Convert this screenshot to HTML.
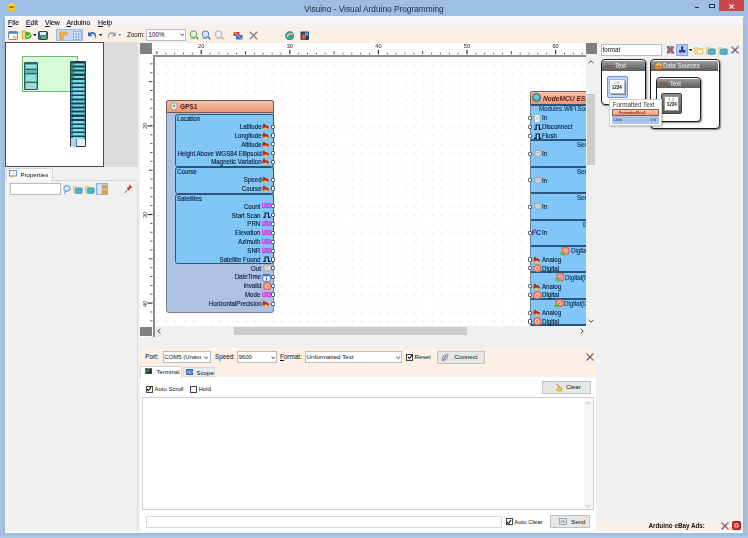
<!DOCTYPE html>
<html>
<head>
<meta charset="utf-8">
<title>Visuino - Visual Arduino Programming</title>
<style>
*{box-sizing:border-box;margin:0;padding:0}
html,body{width:748px;height:538px;overflow:hidden;background:#9ebde3;}
body{font-family:"Liberation Sans",sans-serif;font-size:7px;color:#111;position:relative}
#root{position:absolute;left:0;top:0;width:748px;height:538px;overflow:hidden;filter:blur(0.4px)}
.a{position:absolute}
.t{position:absolute;white-space:nowrap;line-height:1}
.m{top:19.7px;font-size:6.9px;color:#0c0c10;-webkit-text-stroke:.1px #0c0c10}
.gsq{position:absolute;background:#808080}
.blk{position:absolute;border:1.4px solid #74808f;border-radius:3px;background:#adc2e3}
.hdr{position:absolute;border:1.2px solid #7a5a4c;border-radius:3px 3px 0 0;background:linear-gradient(#f7c4aa,#ef9774)}
.grp{position:absolute;border:1.2px solid #30527a;border-radius:2.5px;background:#80c7f8}
.pin{position:absolute;width:4.4px;height:4.4px;border:1px solid #36424e;background:#fff;border-radius:1.3px}
.r{position:absolute;white-space:nowrap;line-height:1;text-align:right;font-size:6.6px;color:#061a32;-webkit-text-stroke:.12px #061a32;transform:scaleX(.93);transform-origin:100% 50%}
.l{position:absolute;white-space:nowrap;line-height:1;font-size:6.6px;color:#061a32;-webkit-text-stroke:.12px #061a32;transform:scaleX(.93);transform-origin:0 50%}
.btn{position:absolute;background:#e7e7e7;border:1px solid #c2c2c2}
.inp{position:absolute;background:#fff;border:1px solid #b8bcc4}
.cb{position:absolute;width:7px;height:7px;background:#fff;border:1px solid #444}
.pg{position:absolute;border:1.5px solid #1c1c1c;border-radius:4px;background:#fff;box-shadow:1px 1px 1.5px rgba(0,0,0,.45)}
.pgh{position:absolute;background:linear-gradient(#9a9a9a,#5c5c5c);border-radius:2px 2px 0 0}
</style>
</head>
<body>
<div id="root">
<div class="a" style="left:0;top:0;width:748px;height:17px;background:#9ebde3"></div>
<div class="t" style="left:0px;top:4.9px;width:748px;text-align:center;font-size:8.3px;color:#1d2b3e">Visuino - Visual Arduino Programming</div>
<div class="a" style="left:4px;top:16.2px;width:740px;height:12px;background:linear-gradient(#f6f8fc,#f3f4fa 55%,#f8f0ee)"></div>
<div class="a" style="left:4px;top:28px;width:740px;height:14px;background:#fcefe4"></div>
<div class="a" style="left:4px;top:42px;width:740px;height:491px;background:#f0f0f0"></div>
<div class="a" style="left:7.2px;top:2.8px;width:8.8px;height:8.8px;border-radius:50%;background:radial-gradient(circle at 50% 35%,#f9e25a,#e0a91a)"></div>
<div class="a" style="left:9px;top:5.6px;width:5.2px;height:2px;background:#a8741a;border-radius:1px"></div>
<div class="a" style="left:695px;top:6.9px;width:4.3px;height:1.4px;background:#1a2a40"></div>
<div class="a" style="left:709px;top:3.7px;width:6.2px;height:4.8px;border:.9px solid #23364e;border-top-width:1.6px;background:#b9cde6"></div>
<div class="a" style="left:719.3px;top:0;width:24.3px;height:11.4px;background:#c9474b"></div>
<svg class="a" style="left:729.4px;top:3.8px" width="5.2" height="5.2" viewBox="0 0 5.2 5.2"><path d="M.5 .5l4.200 4.200M4.700 .5L.5 4.700" stroke="#fdeeee" stroke-width="1.100"/></svg>
<div class="t m" style="left:8px"><u>F</u>ile</div>
<div class="t m" style="left:26px"><u>E</u>dit</div>
<div class="t m" style="left:45px"><u>V</u>iew</div>
<div class="t m" style="left:66.5px"><u>A</u>rduino</div>
<div class="t m" style="left:98px"><u>H</u>elp</div>
<svg class="a" style="left:7.5px;top:30.5px" width="10" height="9" viewBox="0 0 10 9"><rect x="0.5" y="0.5" width="9" height="8" rx="1" fill="#fffdf4" stroke="#7d8a96"/><rect x="0.5" y="0.5" width="9" height="2.2" fill="#3f8fb8"/><rect x="5" y="5" width="3.5" height="2.5" fill="#f0c860"/></svg>
<svg class="a" style="left:21px;top:30px" width="11" height="10" viewBox="0 0 11 10"><path d="M1 1h4l1 1v7H1z" fill="#f3d870" stroke="#c9a638" stroke-width=".6"/><path d="M4 2.5c4-1.5 6.5 1 6.5 3.2c0 2.5-3 4-6 3z" fill="#4cae3c"/><path d="M5 5.5l2 1.8l2.6-3.4" stroke="#d9f5c8" stroke-width="1" fill="none"/></svg>
<svg class="a" style="left:33px;top:34px" width="3.4" height="2.4" viewBox="0 0 3.4 2.4"><path d="M0 0h3.4L1.7 2.2z" fill="#111"/></svg>
<svg class="a" style="left:37.5px;top:30.5px" width="10" height="9" viewBox="0 0 10 9"><rect x="0.5" y="0.5" width="9" height="8" rx="1" fill="#2f66a8" stroke="#1f4a80"/><rect x="2" y="1" width="6" height="3.2" fill="#e9f0fb"/><rect x="3" y="5" width="5.5" height="3" fill="#55b055"/></svg>
<div class="a" style="left:56px;top:29px;width:27px;height:12px;background:#c3d9f3;border:1px solid #9dbce0"></div>
<svg class="a" style="left:59px;top:30.5px" width="9" height="9" viewBox="0 0 9 9"><path d="M1 1h7v3H4v4.5H1z" fill="#f2b24a" stroke="#c98a2a" stroke-width=".6"/></svg>
<svg class="a" style="left:72.5px;top:30.5px" width="9" height="9" viewBox="0 0 9 9"><rect x=".5" y=".5" width="8" height="8" fill="#dbe8f8" stroke="#7f9cc4" stroke-width=".6"/><path d="M3.2 .5v8M5.8 .5v8M.5 3.2h8M.5 5.8h8" stroke="#7f9cc4" stroke-width=".6"/></svg>
<svg class="a" style="left:86.5px;top:30.5px" width="11" height="9" viewBox="0 0 11 9"><path d="M1 .8v4.4h4.4L3.8 3.6c2-1.3 4.6-.3 4.4 3.6l-.3 1.5c2.2-3.4 1.2-7.6-2.6-7.6c-1.2 0-2 .4-2.8 1z" fill="#2f62c4"/></svg>
<svg class="a" style="left:99px;top:34px" width="3.4" height="2.4" viewBox="0 0 3.4 2.4"><path d="M0 0h3.4L1.7 2.2z" fill="#111"/></svg>
<svg class="a" style="left:105.5px;top:30.5px" width="11" height="9" viewBox="0 0 11 9"><path d="M10 .8v4.4H5.6l1.6-1.6c-2-1.3-4.6-.3-4.4 3.6l.3 1.5C.9 5.3 1.9 1.100 5.700 1.100c1.200 0 2 .4 2.800 1z" fill="#a3a9b4"/></svg>
<svg class="a" style="left:118px;top:34px" width="3.4" height="2.4" viewBox="0 0 3.4 2.4"><path d="M0 0h3.4L1.700 2.200z" fill="#8a8a8a"/></svg>
<div class="t" style="left:127px;top:31.5px;font-size:6.3px;color:#111">Zoom:</div>
<div class="inp" style="left:146px;top:29px;width:40px;height:11.500px;"></div>
<div class="t" style="left:148.5px;top:31.5px;font-size:6.300px">100%</div>
<svg class="a" style="left:179.5px;top:33px" width="4.5" height="3.5" viewBox="0 0 4.5 3.5"><path d="M.4 .6L2.250 2.600L4.100 .6" stroke="#333" stroke-width=".9" fill="none"/></svg>
<svg class="a" style="left:189px;top:30px" width="10.5" height="10.5" viewBox="0 0 10.5 10.5"><circle cx="4.500" cy="4.200" r="3.300" fill="#e0f4d0" stroke="#4a9a46" stroke-width=".9"/><path d="M6.800 6.700l2.600 2.600" stroke="#4a9a46" stroke-width="1.400"/><path d="M1.500 8.600h4.500" stroke="#4a9a46" stroke-width="1" opacity=".7"/></svg>
<svg class="a" style="left:201px;top:30px" width="10.5" height="10.5" viewBox="0 0 10.5 10.5"><circle cx="4.500" cy="4.200" r="3.300" fill="#dce8f8" stroke="#3e6eb4" stroke-width=".9"/><path d="M6.800 6.700l2.600 2.600" stroke="#3e6eb4" stroke-width="1.400"/><path d="M1.500 8.600h4.500" stroke="#3e6eb4" stroke-width="1" opacity=".7"/></svg>
<svg class="a" style="left:213.5px;top:30px" width="10.5" height="10.5" viewBox="0 0 10.5 10.5"><circle cx="4.500" cy="4.200" r="3.300" fill="#eceef0" stroke="#a8aeb8" stroke-width=".9"/><path d="M6.800 6.700l2.600 2.600" stroke="#a8aeb8" stroke-width="1.400"/><path d="M1.500 8.600h4.500" stroke="#a8aeb8" stroke-width="1" opacity=".7"/></svg>
<svg class="a" style="left:233px;top:30.5px" width="10" height="9" viewBox="0 0 10 9"><rect x=".5" y="1" width="6" height="4" fill="#cf3d3d"/><rect x="3" y="4" width="6.500" height="4.500" fill="#3b6cc0"/><path d="M1 .5l8 8" stroke="#fff" stroke-width=".7"/></svg>
<svg class="a" style="left:248.5px;top:30.5px" width="9" height="9" viewBox="0 0 9 9"><path d="M.8 .8l7.400 7.400M8.200 .8L.8 8.200" stroke="#7c8088" stroke-width="1.300"/></svg>
<svg class="a" style="left:284.5px;top:30.5px" width="9.5" height="9.5" viewBox="0 0 9.5 9.5"><circle cx="4.700" cy="4.700" r="4.200" fill="#35a7a0" stroke="#1e6e78" stroke-width=".6"/><path d="M2 6c1-3 4-4 6-2.500" stroke="#f3b0a0" stroke-width="1.600" fill="none"/></svg>
<svg class="a" style="left:300px;top:30.5px" width="9.5" height="9.5" viewBox="0 0 9.5 9.5"><rect x=".5" y=".5" width="8.500" height="8.500" rx="1" fill="#27446e"/><rect x="2" y="3.500" width="3.500" height="5" fill="#d95a4a"/><rect x="5" y="1.500" width="3" height="3" fill="#6fa6e0"/></svg>
<div class="a" style="left:4.500px;top:42px;width:99.500px;height:124.500px;background:#fff;border:1px solid #4c4c4c"></div>
<div class="a" style="left:104px;top:42px;width:34px;height:124.500px;background:#dcdcdc"></div>
<div class="a" style="left:21.500px;top:56px;width:56.500px;height:35.500px;background:#d6fbd6;border:1px solid #74b874"></div>
<div class="a" style="left:24px;top:62px;width:13.500px;height:28px;background:#5fb7b0;border:1px solid #2a5a58;border-radius:1px"></div>
<div class="a" style="left:25px;top:63px;width:11.500px;height:1.200px;background:#2f6a66"></div>
<div class="a" style="left:25px;top:68.5px;width:11.500px;height:1.200px;background:#2f6a66"></div>
<div class="a" style="left:25px;top:73px;width:11.500px;height:1.200px;background:#2f6a66"></div>
<div class="a" style="left:25px;top:81.5px;width:11.500px;height:1.200px;background:#2f6a66"></div>
<div class="a" style="left:26px;top:64.500px;width:10px;height:3.500px;background:#8fe0dc"></div>
<div class="a" style="left:26px;top:74.500px;width:10px;height:6px;background:#8fe0dc"></div>
<div class="a" style="left:26px;top:83px;width:10px;height:5.500px;background:#a8d4d8"></div>
<div class="a" style="left:70px;top:60.500px;width:16px;height:86.500px;background:#3f8fa4;border:1px solid #1f3a4a;border-radius:1px"></div>
<div class="a" style="left:71px;top:62.0px;width:14px;height:1.300px;background:#1c3e50"></div>
<div class="a" style="left:73px;top:63.6px;width:11px;height:1.700px;background:#7fd6e4"></div>
<div class="a" style="left:71px;top:66.1px;width:14px;height:1.300px;background:#1c3e50"></div>
<div class="a" style="left:73px;top:67.7px;width:11px;height:1.700px;background:#7fd6e4"></div>
<div class="a" style="left:71px;top:70.2px;width:14px;height:1.300px;background:#1c3e50"></div>
<div class="a" style="left:73px;top:71.8px;width:11px;height:1.700px;background:#7fd6e4"></div>
<div class="a" style="left:71px;top:74.3px;width:14px;height:1.300px;background:#1c3e50"></div>
<div class="a" style="left:73px;top:75.9px;width:11px;height:1.700px;background:#7fd6e4"></div>
<div class="a" style="left:71px;top:78.4px;width:14px;height:1.300px;background:#1c3e50"></div>
<div class="a" style="left:73px;top:80.0px;width:11px;height:1.700px;background:#7fd6e4"></div>
<div class="a" style="left:71px;top:82.5px;width:14px;height:1.300px;background:#1c3e50"></div>
<div class="a" style="left:73px;top:84.1px;width:11px;height:1.700px;background:#7fd6e4"></div>
<div class="a" style="left:71px;top:86.6px;width:14px;height:1.300px;background:#1c3e50"></div>
<div class="a" style="left:73px;top:88.2px;width:11px;height:1.700px;background:#7fd6e4"></div>
<div class="a" style="left:71px;top:90.7px;width:14px;height:1.300px;background:#1c3e50"></div>
<div class="a" style="left:73px;top:92.3px;width:11px;height:1.700px;background:#7fd6e4"></div>
<div class="a" style="left:71px;top:94.8px;width:14px;height:1.300px;background:#1c3e50"></div>
<div class="a" style="left:73px;top:96.4px;width:11px;height:1.700px;background:#7fd6e4"></div>
<div class="a" style="left:71px;top:98.9px;width:14px;height:1.300px;background:#1c3e50"></div>
<div class="a" style="left:73px;top:100.5px;width:11px;height:1.700px;background:#7fd6e4"></div>
<div class="a" style="left:71px;top:103.0px;width:14px;height:1.300px;background:#1c3e50"></div>
<div class="a" style="left:73px;top:104.6px;width:11px;height:1.700px;background:#7fd6e4"></div>
<div class="a" style="left:71px;top:107.1px;width:14px;height:1.300px;background:#1c3e50"></div>
<div class="a" style="left:73px;top:108.7px;width:11px;height:1.700px;background:#7fd6e4"></div>
<div class="a" style="left:71px;top:111.2px;width:14px;height:1.300px;background:#1c3e50"></div>
<div class="a" style="left:73px;top:112.8px;width:11px;height:1.700px;background:#7fd6e4"></div>
<div class="a" style="left:71px;top:115.3px;width:14px;height:1.300px;background:#1c3e50"></div>
<div class="a" style="left:73px;top:116.9px;width:11px;height:1.700px;background:#7fd6e4"></div>
<div class="a" style="left:71px;top:119.4px;width:14px;height:1.300px;background:#1c3e50"></div>
<div class="a" style="left:73px;top:121.0px;width:11px;height:1.700px;background:#7fd6e4"></div>
<div class="a" style="left:71px;top:123.5px;width:14px;height:1.300px;background:#1c3e50"></div>
<div class="a" style="left:73px;top:125.1px;width:11px;height:1.700px;background:#7fd6e4"></div>
<div class="a" style="left:71px;top:127.6px;width:14px;height:1.300px;background:#1c3e50"></div>
<div class="a" style="left:73px;top:129.2px;width:11px;height:1.700px;background:#7fd6e4"></div>
<div class="a" style="left:71px;top:131.7px;width:14px;height:1.300px;background:#1c3e50"></div>
<div class="a" style="left:73px;top:133.3px;width:11px;height:1.700px;background:#7fd6e4"></div>
<div class="a" style="left:71px;top:135.8px;width:14px;height:1.300px;background:#1c3e50"></div>
<div class="a" style="left:73px;top:137.4px;width:11px;height:1.700px;background:#7fd6e4"></div>
<div class="a" style="left:70.500px;top:138px;width:5px;height:8.500px;background:#b9cbe6"></div>
<div class="a" style="left:77px;top:139px;width:7.500px;height:6.500px;background:#e8eef6"></div>
<div class="a" style="left:70px;top:61px;width:5px;height:18px;background:rgba(40,110,60,.35)"></div>
<div class="a" style="left:5px;top:180px;width:132.5px;height:354px;background:#f0f0f0;border:1px solid #dcdcdc"></div>
<div class="a" style="left:5.500px;top:168px;width:47px;height:13px;background:#f9f9f9;border:1px solid #d4d4d4;border-bottom:none"></div>
<svg class="a" style="left:9px;top:170px" width="8" height="8" viewBox="0 0 8 8"><rect x=".5" y=".5" width="7" height="5.500" fill="#e9f1fb" stroke="#5b7fb0" stroke-width=".8"/><rect x="1.500" y="5.500" width="3" height="1.800" fill="#d6b24a"/></svg>
<div class="t" style="left:20.5px;top:171.5px;font-size:6.100px;color:#111">Properties</div>
<div class="inp" style="left:10px;top:183px;width:51px;height:12px;"></div>
<svg class="a" style="left:62.5px;top:184.5px" width="8" height="9" viewBox="0 0 8 9"><ellipse cx="4" cy="3.500" rx="3.300" ry="2.800" fill="#cfe6fa" stroke="#4d8ec8" stroke-width=".9"/><path d="M2.500 6l-1 2.500" stroke="#4d8ec8" stroke-width="1"/></svg>
<svg class="a" style="left:72.5px;top:184.5px" width="10" height="9" viewBox="0 0 10 9"><path d="M.5 1.500h3.500l1 1H9v5.500H.5z" fill="#f2dc90" stroke="#d4b450" stroke-width=".5"/><rect x="2.300" y="3" width="7" height="5.400" rx="1.200" fill="#4cb0dc" stroke="#2f86b4" stroke-width=".5"/></svg>
<svg class="a" style="left:85px;top:184.5px" width="10" height="9" viewBox="0 0 10 9"><path d="M.5 1.500h3.500l1 1H9v5.500H.5z" fill="#f2dc90" stroke="#d4b450" stroke-width=".5"/><rect x="2.300" y="3" width="7" height="5.400" rx="1.200" fill="#4cb0dc" stroke="#2f86b4" stroke-width=".5"/></svg>
<div class="a" style="left:96px;top:183px;width:12px;height:12px;background:#bcd4f0;border:1px solid #8fb0dc"></div>
<div class="a" style="left:98px;top:184.500px;width:3px;height:9px;background:#dbe8f8"></div>
<div class="a" style="left:102px;top:184.500px;width:4.500px;height:4px;background:#e0a04a"></div>
<div class="a" style="left:102px;top:189.500px;width:4.500px;height:4px;background:#e0a04a"></div>
<svg class="a" style="left:124px;top:184px" width="9" height="10" viewBox="0 0 9 10"><path d="M5.500 .5l3 3l-2 .8l-1.500 2.500L2.500 4.300L5 2.600z" fill="#d8413c"/><path d="M3.500 5.800L.8 9" stroke="#8a4a48" stroke-width=".9"/></svg><div class="a" style="left:140px;top:43px;width:457px;height:12.5px;background:#fff"></div>
<div class="a" style="left:140px;top:54px;width:14px;height:283px;background:#fff"></div>
<div class="gsq" style="left:140px;top:43.2px;width:12.2px;height:10.8px"></div>
<div class="gsq" style="left:586.4px;top:43.2px;width:10.4px;height:10.6px"></div>
<div class="gsq" style="left:140px;top:326.5px;width:12px;height:9.7px"></div>
<svg class="a" style="left:0;top:43px" width="600" height="12"><rect x="156.4" y="8.2" width="1" height="3.1" fill="#444"/><rect x="165.3" y="9.7" width="1" height="1.6" fill="#555"/><rect x="174.1" y="9.7" width="1" height="1.6" fill="#555"/><rect x="183.0" y="9.7" width="1" height="1.6" fill="#555"/><rect x="191.8" y="9.7" width="1" height="1.6" fill="#555"/><rect x="200.6" y="7" width="1.2" height="4.3" fill="#333"/><rect x="209.6" y="9.7" width="1" height="1.6" fill="#555"/><rect x="218.4" y="9.7" width="1" height="1.6" fill="#555"/><rect x="227.3" y="9.7" width="1" height="1.6" fill="#555"/><rect x="236.1" y="9.7" width="1" height="1.6" fill="#555"/><rect x="245.0" y="8.2" width="1" height="3.1" fill="#444"/><rect x="253.9" y="9.7" width="1" height="1.6" fill="#555"/><rect x="262.7" y="9.7" width="1" height="1.6" fill="#555"/><rect x="271.6" y="9.7" width="1" height="1.6" fill="#555"/><rect x="280.4" y="9.7" width="1" height="1.6" fill="#555"/><rect x="289.2" y="7" width="1.2" height="4.3" fill="#333"/><rect x="298.2" y="9.7" width="1" height="1.6" fill="#555"/><rect x="307.0" y="9.7" width="1" height="1.6" fill="#555"/><rect x="315.9" y="9.7" width="1" height="1.6" fill="#555"/><rect x="324.7" y="9.7" width="1" height="1.6" fill="#555"/><rect x="333.6" y="8.2" width="1" height="3.1" fill="#444"/><rect x="342.5" y="9.7" width="1" height="1.6" fill="#555"/><rect x="351.3" y="9.7" width="1" height="1.6" fill="#555"/><rect x="360.2" y="9.7" width="1" height="1.6" fill="#555"/><rect x="369.0" y="9.7" width="1" height="1.6" fill="#555"/><rect x="377.8" y="7" width="1.2" height="4.3" fill="#333"/><rect x="386.8" y="9.7" width="1" height="1.6" fill="#555"/><rect x="395.6" y="9.7" width="1" height="1.6" fill="#555"/><rect x="404.5" y="9.7" width="1" height="1.6" fill="#555"/><rect x="413.3" y="9.7" width="1" height="1.6" fill="#555"/><rect x="422.2" y="8.2" width="1" height="3.1" fill="#444"/><rect x="431.1" y="9.7" width="1" height="1.6" fill="#555"/><rect x="439.9" y="9.7" width="1" height="1.6" fill="#555"/><rect x="448.8" y="9.7" width="1" height="1.6" fill="#555"/><rect x="457.6" y="9.7" width="1" height="1.6" fill="#555"/><rect x="466.4" y="7" width="1.2" height="4.3" fill="#333"/><rect x="475.4" y="9.7" width="1" height="1.6" fill="#555"/><rect x="484.2" y="9.7" width="1" height="1.6" fill="#555"/><rect x="493.1" y="9.7" width="1" height="1.6" fill="#555"/><rect x="501.9" y="9.7" width="1" height="1.6" fill="#555"/><rect x="510.8" y="8.2" width="1" height="3.1" fill="#444"/><rect x="519.7" y="9.7" width="1" height="1.6" fill="#555"/><rect x="528.5" y="9.7" width="1" height="1.6" fill="#555"/><rect x="537.4" y="9.7" width="1" height="1.6" fill="#555"/><rect x="546.2" y="9.7" width="1" height="1.6" fill="#555"/><rect x="555.0" y="7" width="1.2" height="4.3" fill="#333"/><rect x="564.0" y="9.7" width="1" height="1.6" fill="#555"/><rect x="572.8" y="9.7" width="1" height="1.6" fill="#555"/><rect x="581.7" y="9.7" width="1" height="1.6" fill="#555"/></svg>
<div class="t" style="left:191.2px;top:44.3px;width:20px;text-align:center;font-size:5.7px;color:#222">20</div>
<div class="t" style="left:279.79999999999995px;top:44.3px;width:20px;text-align:center;font-size:5.7px;color:#222">30</div>
<div class="t" style="left:368.4px;top:44.3px;width:20px;text-align:center;font-size:5.7px;color:#222">40</div>
<div class="t" style="left:457.0px;top:44.3px;width:20px;text-align:center;font-size:5.7px;color:#222">50</div>
<div class="t" style="left:545.5999999999999px;top:44.3px;width:20px;text-align:center;font-size:5.7px;color:#222">60</div>
<svg class="a" style="left:0;top:0" width="160" height="330"><rect x="150.3" y="63.4" width="2.2" height="1" fill="#555"/><rect x="150.3" y="72.2" width="2.2" height="1" fill="#555"/><rect x="148.8" y="81.1" width="3.7" height="1" fill="#444"/><rect x="150.3" y="90.0" width="2.2" height="1" fill="#555"/><rect x="150.3" y="98.8" width="2.2" height="1" fill="#555"/><rect x="150.3" y="107.7" width="2.2" height="1" fill="#555"/><rect x="150.3" y="116.5" width="2.2" height="1" fill="#555"/><rect x="147.5" y="125.3" width="5" height="1.2" fill="#333"/><rect x="150.3" y="134.3" width="2.2" height="1" fill="#555"/><rect x="150.3" y="143.1" width="2.2" height="1" fill="#555"/><rect x="150.3" y="152.0" width="2.2" height="1" fill="#555"/><rect x="150.3" y="160.8" width="2.2" height="1" fill="#555"/><rect x="148.8" y="169.7" width="3.7" height="1" fill="#444"/><rect x="150.3" y="178.6" width="2.2" height="1" fill="#555"/><rect x="150.3" y="187.4" width="2.2" height="1" fill="#555"/><rect x="150.3" y="196.3" width="2.2" height="1" fill="#555"/><rect x="150.3" y="205.1" width="2.2" height="1" fill="#555"/><rect x="147.5" y="213.9" width="5" height="1.2" fill="#333"/><rect x="150.3" y="222.9" width="2.2" height="1" fill="#555"/><rect x="150.3" y="231.7" width="2.2" height="1" fill="#555"/><rect x="150.3" y="240.6" width="2.2" height="1" fill="#555"/><rect x="150.3" y="249.4" width="2.2" height="1" fill="#555"/><rect x="148.8" y="258.3" width="3.7" height="1" fill="#444"/><rect x="150.3" y="267.2" width="2.2" height="1" fill="#555"/><rect x="150.3" y="276.0" width="2.2" height="1" fill="#555"/><rect x="150.3" y="284.9" width="2.2" height="1" fill="#555"/><rect x="150.3" y="293.7" width="2.2" height="1" fill="#555"/><rect x="147.5" y="302.5" width="5" height="1.2" fill="#333"/><rect x="150.3" y="311.5" width="2.2" height="1" fill="#555"/><rect x="150.3" y="320.3" width="2.2" height="1" fill="#555"/></svg>
<div class="t" style="left:136.3px;top:123.30000000000001px;width:20px;text-align:center;font-size:5.7px;color:#222;transform:rotate(-90deg)">20</div>
<div class="t" style="left:136.3px;top:211.89999999999998px;width:20px;text-align:center;font-size:5.7px;color:#222;transform:rotate(-90deg)">30</div>
<div class="t" style="left:136.3px;top:300.5px;width:20px;text-align:center;font-size:5.7px;color:#222;transform:rotate(-90deg)">40</div>
<div class="a" style="left:153.3px;top:55px;width:433.1px;height:270.7px;background:#fff;overflow:hidden">
<div class="a" style="left:0;top:0;width:440px;height:280px;background-image:radial-gradient(circle,#e0e0e0 0.5px,rgba(255,255,255,0) 1.1px);background-size:8.86px 8.86px;background-position:0.47px 5.37px"></div>
<div class="a" style="left:0;top:0;width:440px;height:1.6px;background:#8c8c8c"></div>
<div class="a" style="left:0;top:0;width:1.6px;height:280px;background:#8c8c8c"></div>
</div>
<div class="blk" style="left:165.8px;top:99.8px;width:107.9px;height:213px"></div>
<div class="hdr" style="left:165.8px;top:99.8px;width:107.9px;height:13.6px"></div>
<svg class="a" style="left:169.5px;top:102.3px" width="8" height="9" viewBox="0 0 8 9"><path d="M1 1h6v4.500L4 8.500L1 5.500z" fill="#e9eef2" stroke="#7a8a96" stroke-width=".8"/><circle cx="4" cy="4" r="1.300" fill="#7ab85a"/></svg>
<div class="t" style="left:180px;top:103.1px;font-size:7.2px;font-weight:bold;color:#5a1410;transform:scaleX(.9);transform-origin:0 50%">GPS1</div>
<div class="grp" style="left:174.9px;top:114.2px;width:98.8px;height:52.8px"></div>
<div class="grp" style="left:174.9px;top:167.4px;width:98.8px;height:26.2px"></div>
<div class="grp" style="left:174.9px;top:193.7px;width:98.8px;height:70.2px"></div>
<div class="l" style="left:176.6px;top:116.2px;">Location</div>
<div class="l" style="left:176.6px;top:169.2px;">Course</div>
<div class="l" style="left:176.6px;top:195.7px;">Satellites</div>
<div class="r" style="left:100px;top:124.10000000000001px;width:161.6px">Latitude</div>
<svg class="a" style="left:262.40000000000003px;top:123.10000000000001px" width="7.4" height="7" viewBox="0 0 7.4 7"><path d="M.3 5.200L.7 2.300L1.900 .5L3.200 2.300L4.200 1.700L5.400 3L6.600 2.900L7 5.400z" fill="#be2c1c"/><path d="M1.300 1.800L1.900 .5L3.200 2.300L2.600 3z" fill="#7a2418" opacity=".7"/><path d="M1.300 5Q3.700 4 6.200 5L6 6.300Q3.700 6.900 1.500 6.300z" fill="#f2a028"/><path d="M2.600 5.800Q3.700 5.400 4.800 5.800L4.700 6.500Q3.700 6.800 2.700 6.500z" fill="#f8d850"/></svg>
<div class="pin" style="left:271.1px;top:124.5px"></div>
<div class="r" style="left:100px;top:132.9px;width:161.6px">Longitude</div>
<svg class="a" style="left:262.40000000000003px;top:131.9px" width="7.4" height="7" viewBox="0 0 7.4 7"><path d="M.3 5.200L.7 2.300L1.900 .5L3.200 2.300L4.200 1.700L5.400 3L6.600 2.900L7 5.400z" fill="#be2c1c"/><path d="M1.300 1.800L1.900 .5L3.200 2.300L2.600 3z" fill="#7a2418" opacity=".7"/><path d="M1.300 5Q3.700 4 6.200 5L6 6.300Q3.700 6.900 1.500 6.300z" fill="#f2a028"/><path d="M2.600 5.800Q3.700 5.400 4.800 5.800L4.700 6.500Q3.700 6.800 2.700 6.500z" fill="#f8d850"/></svg>
<div class="pin" style="left:271.1px;top:133.3px"></div>
<div class="r" style="left:100px;top:141.70000000000002px;width:161.6px">Altitude</div>
<svg class="a" style="left:262.40000000000003px;top:140.70000000000002px" width="7.4" height="7" viewBox="0 0 7.4 7"><path d="M.3 5.200L.7 2.300L1.900 .5L3.200 2.300L4.200 1.700L5.400 3L6.600 2.900L7 5.400z" fill="#be2c1c"/><path d="M1.300 1.800L1.900 .5L3.200 2.300L2.600 3z" fill="#7a2418" opacity=".7"/><path d="M1.300 5Q3.700 4 6.200 5L6 6.300Q3.700 6.900 1.500 6.300z" fill="#f2a028"/><path d="M2.600 5.800Q3.700 5.400 4.800 5.800L4.700 6.500Q3.700 6.800 2.700 6.500z" fill="#f8d850"/></svg>
<div class="pin" style="left:271.1px;top:142.1px"></div>
<div class="r" style="left:100px;top:150.5px;width:161.6px">Height Above WGS84 Ellipsoid</div>
<svg class="a" style="left:262.40000000000003px;top:149.5px" width="7.4" height="7" viewBox="0 0 7.4 7"><path d="M.3 5.200L.7 2.300L1.900 .5L3.200 2.300L4.200 1.700L5.400 3L6.600 2.900L7 5.400z" fill="#be2c1c"/><path d="M1.300 1.800L1.900 .5L3.200 2.300L2.600 3z" fill="#7a2418" opacity=".7"/><path d="M1.300 5Q3.700 4 6.200 5L6 6.300Q3.700 6.900 1.500 6.300z" fill="#f2a028"/><path d="M2.600 5.800Q3.700 5.400 4.800 5.800L4.700 6.500Q3.700 6.800 2.700 6.500z" fill="#f8d850"/></svg>
<div class="pin" style="left:271.1px;top:150.9px"></div>
<div class="r" style="left:100px;top:159.4px;width:161.6px">Magnetic Variation</div>
<svg class="a" style="left:262.40000000000003px;top:158.4px" width="7.4" height="7" viewBox="0 0 7.4 7"><path d="M.3 5.200L.7 2.300L1.900 .5L3.200 2.300L4.200 1.700L5.400 3L6.600 2.900L7 5.400z" fill="#be2c1c"/><path d="M1.300 1.800L1.900 .5L3.200 2.300L2.600 3z" fill="#7a2418" opacity=".7"/><path d="M1.300 5Q3.700 4 6.200 5L6 6.300Q3.700 6.900 1.500 6.300z" fill="#f2a028"/><path d="M2.600 5.800Q3.700 5.400 4.800 5.800L4.700 6.500Q3.700 6.800 2.700 6.500z" fill="#f8d850"/></svg>
<div class="pin" style="left:271.1px;top:159.8px"></div>
<div class="r" style="left:100px;top:177.1px;width:161.6px">Speed</div>
<svg class="a" style="left:262.40000000000003px;top:176.1px" width="7.4" height="7" viewBox="0 0 7.4 7"><path d="M.3 5.200L.7 2.300L1.900 .5L3.200 2.300L4.200 1.700L5.400 3L6.600 2.900L7 5.400z" fill="#be2c1c"/><path d="M1.300 1.800L1.900 .5L3.200 2.300L2.600 3z" fill="#7a2418" opacity=".7"/><path d="M1.300 5Q3.700 4 6.200 5L6 6.300Q3.700 6.900 1.500 6.300z" fill="#f2a028"/><path d="M2.600 5.800Q3.700 5.400 4.800 5.800L4.700 6.500Q3.700 6.800 2.700 6.500z" fill="#f8d850"/></svg>
<div class="pin" style="left:271.1px;top:177.5px"></div>
<div class="r" style="left:100px;top:185.9px;width:161.6px">Course</div>
<svg class="a" style="left:262.40000000000003px;top:184.9px" width="7.4" height="7" viewBox="0 0 7.4 7"><path d="M.3 5.200L.7 2.300L1.900 .5L3.200 2.300L4.200 1.700L5.400 3L6.600 2.900L7 5.400z" fill="#be2c1c"/><path d="M1.300 1.800L1.900 .5L3.200 2.300L2.600 3z" fill="#7a2418" opacity=".7"/><path d="M1.300 5Q3.700 4 6.200 5L6 6.300Q3.700 6.900 1.500 6.300z" fill="#f2a028"/><path d="M2.600 5.800Q3.700 5.400 4.800 5.800L4.700 6.500Q3.700 6.800 2.700 6.500z" fill="#f8d850"/></svg>
<div class="pin" style="left:271.1px;top:186.3px"></div>
<div class="r" style="left:100px;top:203.70000000000002px;width:160.3px">Count</div>
<div class="t" style="left:262.0px;top:203.3px;font-size:6.4px;color:#e030e4;font-weight:bold;letter-spacing:-.2px;-webkit-text-stroke:.4px #e030e4;transform:scaleX(.82);transform-origin:0 50%">U32</div>
<div class="pin" style="left:271.1px;top:204.1px"></div>
<div class="r" style="left:100px;top:212.6px;width:160.5px">Start Scan</div>
<svg class="a" style="left:262.6px;top:212.0px" width="8" height="6.5" viewBox="0 0 8 6.5"><path d="M.2 5.400h1.900V1h3.300v4.400h2.200" stroke="#0a1a30" stroke-width="1.100" fill="none"/></svg>
<div class="pin" style="left:271.1px;top:213.0px"></div>
<div class="r" style="left:100px;top:221.4px;width:160.3px">PRN</div>
<div class="t" style="left:262.0px;top:221.0px;font-size:6.4px;color:#e030e4;font-weight:bold;letter-spacing:-.2px;-webkit-text-stroke:.4px #e030e4;transform:scaleX(.82);transform-origin:0 50%">U32</div>
<div class="pin" style="left:271.1px;top:221.8px"></div>
<div class="r" style="left:100px;top:230.4px;width:160.3px">Elevation</div>
<div class="t" style="left:262.0px;top:230.0px;font-size:6.4px;color:#e030e4;font-weight:bold;letter-spacing:-.2px;-webkit-text-stroke:.4px #e030e4;transform:scaleX(.82);transform-origin:0 50%">U32</div>
<div class="pin" style="left:271.1px;top:230.8px"></div>
<div class="r" style="left:100px;top:239.3px;width:160.3px">Azimuth</div>
<div class="t" style="left:262.0px;top:238.9px;font-size:6.4px;color:#e030e4;font-weight:bold;letter-spacing:-.2px;-webkit-text-stroke:.4px #e030e4;transform:scaleX(.82);transform-origin:0 50%">U32</div>
<div class="pin" style="left:271.1px;top:239.7px"></div>
<div class="r" style="left:100px;top:248.20000000000002px;width:160.3px">SNR</div>
<div class="t" style="left:262.0px;top:247.8px;font-size:6.4px;color:#e030e4;font-weight:bold;letter-spacing:-.2px;-webkit-text-stroke:.4px #e030e4;transform:scaleX(.82);transform-origin:0 50%">U32</div>
<div class="pin" style="left:271.1px;top:248.6px"></div>
<div class="r" style="left:100px;top:257.0px;width:160.5px">Satellite Found</div>
<svg class="a" style="left:262.6px;top:256.40000000000003px" width="8" height="6.5" viewBox="0 0 8 6.5"><path d="M.2 5.400h1.900V1h3.300v4.400h2.200" stroke="#0a1a30" stroke-width="1.100" fill="none"/></svg>
<div class="pin" style="left:271.1px;top:257.4px"></div>
<div class="r" style="left:100px;top:265.7px;width:161.0px">Out</div>
<svg class="a" style="left:262.5px;top:264.3px" width="9" height="8" viewBox="0 0 9 8"><path d="M1 1h7v4L4.500 7.500L1 5z" fill="#dfe2e4" stroke="#8a9096" stroke-width=".7"/><path d="M3 3.200h3" stroke="#d8a868" stroke-width="1"/></svg>
<div class="pin" style="left:271.1px;top:266.1px"></div>
<div class="r" style="left:100px;top:274.4px;width:161.0px">DateTime</div>
<svg class="a" style="left:262.3px;top:272.5px" width="9" height="9" viewBox="0 0 9 9"><rect x=".7" y="1.500" width="7.600" height="6.800" rx="1" fill="#f4f8fc" stroke="#3a78b8" stroke-width=".9"/><rect x=".7" y="1.500" width="7.600" height="1.800" fill="#3a78b8"/><path d="M4.500 4.300v3" stroke="#333" stroke-width=".8"/></svg>
<div class="pin" style="left:271.1px;top:274.8px"></div>
<div class="r" style="left:100px;top:283.2px;width:161.3px">Invalid</div>
<svg class="a" style="left:262.8px;top:281.8px" width="8.5" height="8.5" viewBox="0 0 8.5 8.5"><rect x=".5" y=".5" width="7.500" height="7.500" rx="3" fill="#f2846c" stroke="#d4543e" stroke-width=".6"/><circle cx="4.250" cy="4.300" r="1.900" fill="none" stroke="#fbd6c8" stroke-width=".9"/></svg>
<div class="pin" style="left:271.1px;top:283.6px"></div>
<div class="r" style="left:100px;top:292.0px;width:160.3px">Mode</div>
<div class="t" style="left:262.0px;top:291.6px;font-size:6.4px;color:#e030e4;font-weight:bold;letter-spacing:-.2px;-webkit-text-stroke:.4px #e030e4;transform:scaleX(.82);transform-origin:0 50%">U32</div>
<div class="pin" style="left:271.1px;top:292.4px"></div>
<div class="r" style="left:100px;top:301.2px;width:161.6px">HorizontalPrecision</div>
<svg class="a" style="left:262.40000000000003px;top:300.2px" width="7.4" height="7" viewBox="0 0 7.4 7"><path d="M.3 5.200L.7 2.300L1.900 .5L3.200 2.300L4.200 1.700L5.400 3L6.600 2.900L7 5.400z" fill="#be2c1c"/><path d="M1.300 1.800L1.900 .5L3.200 2.300L2.600 3z" fill="#7a2418" opacity=".7"/><path d="M1.300 5Q3.700 4 6.200 5L6 6.300Q3.700 6.900 1.500 6.300z" fill="#f2a028"/><path d="M2.600 5.800Q3.700 5.400 4.800 5.800L4.700 6.500Q3.700 6.800 2.700 6.500z" fill="#f8d850"/></svg>
<div class="pin" style="left:271.1px;top:301.6px"></div>
<div class="a" style="left:528.3px;top:89px;width:58.1px;height:236.7px;overflow:hidden">
<div class="blk" style="left:2px;top:2.3px;width:80px;height:260px;background:#80c6f8"></div>
<div class="hdr" style="left:2px;top:2.3px;width:80px;height:13.5px"></div>
<div class="a" style="left:3.8px;top:4.3px;width:8.6px;height:8.6px;border-radius:50%;background:radial-gradient(circle at 50% 40%,#7fd8d0,#1f9a98);border:.8px solid #2a6a76"></div>
<div class="t" style="left:15px;top:5.600px;font-size:7.200px;font-weight:bold;color:#5a1a10;font-style:italic;transform:scaleX(.92);transform-origin:0 50%">NodeMCU ESP-12</div>
<div class="l" style="left:10.700px;top:17.400px;color:#1a4670">Modules.WiFi.Sockets</div>
<div class="a" style="left:3px;top:14.7px;width:80px;height:2px;background:#2c557c"></div>
<div class="a" style="left:3px;top:50.2px;width:80px;height:2px;background:#2c557c"></div>
<div class="a" style="left:3px;top:76.9px;width:80px;height:2px;background:#2c557c"></div>
<div class="a" style="left:3px;top:103.2px;width:80px;height:2px;background:#2c557c"></div>
<div class="a" style="left:3px;top:129.7px;width:80px;height:2px;background:#2c557c"></div>
<div class="a" style="left:3px;top:156.2px;width:80px;height:2px;background:#2c557c"></div>
<div class="a" style="left:3px;top:182.4px;width:80px;height:2px;background:#2c557c"></div>
<div class="a" style="left:3px;top:208.9px;width:80px;height:2px;background:#2c557c"></div>
<div class="a" style="left:3px;top:235.2px;width:80px;height:2px;background:#2c557c"></div>
</div>
<div class="pin" style="left:527.8px;top:115.8px"></div>
<svg class="a" style="left:534px;top:113.5px" width="6.5" height="9" viewBox="0 0 6.5 9"><rect x=".5" y=".5" width="5.500" height="8" rx="1" fill="#f0f3f6" stroke="#9aa4ae" stroke-width=".7"/><path d="M1.800 3h2.800M1.800 5h2.800" stroke="#9aa4ae" stroke-width=".6"/></svg>
<div class="l" style="left:542.3px;top:115.4px;">In</div>
<div class="pin" style="left:527.8px;top:124.8px"></div>
<svg class="a" style="left:533.5px;top:123.8px" width="8" height="6.5" viewBox="0 0 8 6.5"><path d="M.2 5.400h1.900V1h3.300v4.400h2.200" stroke="#0a1a30" stroke-width="1.100" fill="none"/></svg>
<div class="l" style="left:542.3px;top:124.4px;">Disconnect</div>
<div class="pin" style="left:527.8px;top:133.6px"></div>
<svg class="a" style="left:533.5px;top:132.60000000000002px" width="8" height="6.5" viewBox="0 0 8 6.5"><path d="M.2 5.400h1.900V1h3.300v4.400h2.200" stroke="#0a1a30" stroke-width="1.100" fill="none"/></svg>
<div class="l" style="left:542.3px;top:133.20000000000002px;">Flush</div>
<div class="pin" style="left:527.8px;top:151.5px"></div>
<svg class="a" style="left:533.5px;top:149.2px" width="8" height="9" viewBox="0 0 8 9"><path d="M.8 1.500h6.400v3.500L4 8L.8 5z" fill="#d4d8dc" stroke="#8e949a" stroke-width=".7"/><path d="M2.500 3.500h3" stroke="#d8a868" stroke-width="1"/></svg>
<div class="l" style="left:542.3px;top:151.1px;">In</div>
<div class="pin" style="left:527.8px;top:178.0px"></div>
<svg class="a" style="left:533.5px;top:175.7px" width="8" height="9" viewBox="0 0 8 9"><path d="M.8 1.500h6.400v3.500L4 8L.8 5z" fill="#d4d8dc" stroke="#8e949a" stroke-width=".7"/><path d="M2.500 3.500h3" stroke="#d8a868" stroke-width="1"/></svg>
<div class="l" style="left:542.3px;top:177.6px;">In</div>
<div class="pin" style="left:527.8px;top:204.5px"></div>
<svg class="a" style="left:533.5px;top:202.2px" width="8" height="9" viewBox="0 0 8 9"><path d="M.8 1.500h6.400v3.500L4 8L.8 5z" fill="#d4d8dc" stroke="#8e949a" stroke-width=".7"/><path d="M2.500 3.500h3" stroke="#d8a868" stroke-width="1"/></svg>
<div class="l" style="left:542.3px;top:204.1px;">In</div>
<div class="pin" style="left:527.8px;top:230.8px"></div>
<div class="t" style="left:531.8px;top:228.7px;font-size:7.400px;font-weight:bold;color:#1c1cb8;letter-spacing:-.4px">I<span style="color:#c22;font-size:5px;vertical-align:2px">2</span>C</div>
<div class="l" style="left:542.3px;top:230.4px;">In</div>
<div class="pin" style="left:527.8px;top:257.4px"></div>
<svg class="a" style="left:533.1px;top:256.0px" width="7.4" height="7" viewBox="0 0 7.4 7"><path d="M.3 5.200L.7 2.300L1.900 .5L3.200 2.300L4.200 1.700L5.400 3L6.600 2.900L7 5.400z" fill="#be2c1c"/><path d="M1.300 1.800L1.900 .5L3.200 2.300L2.600 3z" fill="#7a2418" opacity=".7"/><path d="M1.300 5Q3.700 4 6.200 5L6 6.300Q3.700 6.900 1.500 6.300z" fill="#f2a028"/><path d="M2.600 5.800Q3.700 5.400 4.800 5.800L4.700 6.500Q3.700 6.800 2.700 6.500z" fill="#f8d850"/></svg>
<div class="l" style="left:542.3px;top:257.0px;">Analog</div>
<div class="pin" style="left:527.8px;top:266.1px"></div>
<svg class="a" style="left:533.2px;top:264.3px" width="8.5" height="8.5" viewBox="0 0 8.5 8.5"><rect x=".5" y=".5" width="7.500" height="7.500" rx="3" fill="#f2846c" stroke="#d4543e" stroke-width=".6"/><circle cx="4.250" cy="4.300" r="1.900" fill="none" stroke="#fbd6c8" stroke-width=".9"/></svg>
<div class="l" style="left:542.3px;top:265.7px;">Digital</div>
<div class="pin" style="left:527.8px;top:283.9px"></div>
<svg class="a" style="left:533.1px;top:282.5px" width="7.4" height="7" viewBox="0 0 7.4 7"><path d="M.3 5.200L.7 2.300L1.900 .5L3.200 2.300L4.200 1.700L5.400 3L6.600 2.900L7 5.400z" fill="#be2c1c"/><path d="M1.300 1.800L1.900 .5L3.200 2.300L2.600 3z" fill="#7a2418" opacity=".7"/><path d="M1.300 5Q3.700 4 6.200 5L6 6.300Q3.700 6.900 1.500 6.300z" fill="#f2a028"/><path d="M2.600 5.800Q3.700 5.400 4.800 5.800L4.700 6.500Q3.700 6.800 2.700 6.500z" fill="#f8d850"/></svg>
<div class="l" style="left:542.3px;top:283.5px;">Analog</div>
<div class="pin" style="left:527.8px;top:292.6px"></div>
<svg class="a" style="left:533.2px;top:290.8px" width="8.5" height="8.5" viewBox="0 0 8.5 8.5"><rect x=".5" y=".5" width="7.500" height="7.500" rx="3" fill="#f2846c" stroke="#d4543e" stroke-width=".6"/><circle cx="4.250" cy="4.300" r="1.900" fill="none" stroke="#fbd6c8" stroke-width=".9"/></svg>
<div class="l" style="left:542.3px;top:292.2px;">Digital</div>
<div class="pin" style="left:527.8px;top:310.5px"></div>
<svg class="a" style="left:533.1px;top:309.09999999999997px" width="7.4" height="7" viewBox="0 0 7.4 7"><path d="M.3 5.200L.7 2.300L1.900 .5L3.200 2.300L4.200 1.700L5.400 3L6.600 2.900L7 5.400z" fill="#be2c1c"/><path d="M1.300 1.800L1.900 .5L3.200 2.300L2.600 3z" fill="#7a2418" opacity=".7"/><path d="M1.300 5Q3.700 4 6.200 5L6 6.300Q3.700 6.900 1.500 6.300z" fill="#f2a028"/><path d="M2.600 5.800Q3.700 5.400 4.800 5.800L4.700 6.500Q3.700 6.800 2.700 6.500z" fill="#f8d850"/></svg>
<div class="l" style="left:542.3px;top:310.09999999999997px;">Analog</div>
<div class="pin" style="left:527.8px;top:319.2px"></div>
<svg class="a" style="left:533.2px;top:317.4px" width="8.5" height="8.5" viewBox="0 0 8.5 8.5"><rect x=".5" y=".5" width="7.500" height="7.500" rx="3" fill="#f2846c" stroke="#d4543e" stroke-width=".6"/><circle cx="4.250" cy="4.300" r="1.900" fill="none" stroke="#fbd6c8" stroke-width=".9"/></svg>
<div class="l" style="left:542.3px;top:318.79999999999995px;">Digital</div>
<div class="a" style="left:529px;top:138px;width:57.4px;height:187.7px;overflow:hidden">
<div class="l" style="left:47.7px;top:3.9px;color:#103a60">Serial[0]</div>
<div class="l" style="left:47.7px;top:30.6px;color:#103a60">Serial[1]</div>
<div class="l" style="left:47.7px;top:57.2px;color:#103a60">Serial[2]</div>
<div class="l" style="left:53.8px;top:83.7px;color:#103a60">I2C</div>
<div class="l" style="left:41.6px;top:110.4px;color:#103a60">Digital[ 0 ]</div>
<div class="l" style="left:35.8px;top:136.9px;color:#103a60">Digital(I2C-SCL)[ 1 ]</div>
<div class="l" style="left:35.4px;top:163.4px;color:#103a60">Digital(I2C-SDA)[ 2 ]</div>
</div>
<svg class="a" style="left:560.3px;top:246.5px" width="9.5" height="9.5" viewBox="0 0 9.5 9.5"><rect x="1.800" y=".5" width="7.200" height="7.200" rx="1.800" fill="#f2846c" stroke="#d4543e" stroke-width=".6"/><circle cx="5.400" cy="4.100" r="1.700" fill="none" stroke="#fbd6c8" stroke-width=".8"/><path d="M0 8.200c0-2.600 1.500-3.200 3.200-2.700v-1.500l2.800 2.600L3.200 9.300V8c-1.200-.3-2.200-.3-3.200 .2z" fill="#62b83c"/></svg>
<svg class="a" style="left:554.5px;top:272.9px" width="9.5" height="9.5" viewBox="0 0 9.5 9.5"><rect x="1.800" y=".5" width="7.200" height="7.200" rx="1.800" fill="#f2846c" stroke="#d4543e" stroke-width=".6"/><circle cx="5.400" cy="4.100" r="1.700" fill="none" stroke="#fbd6c8" stroke-width=".8"/><path d="M0 8.200c0-2.600 1.500-3.200 3.200-2.700v-1.500l2.800 2.600L3.200 9.300V8c-1.200-.3-2.200-.3-3.200 .2z" fill="#62b83c"/></svg>
<svg class="a" style="left:554.2px;top:299.4px" width="9.5" height="9.5" viewBox="0 0 9.5 9.5"><rect x="1.800" y=".5" width="7.200" height="7.200" rx="1.800" fill="#f2846c" stroke="#d4543e" stroke-width=".6"/><circle cx="5.400" cy="4.100" r="1.700" fill="none" stroke="#fbd6c8" stroke-width=".8"/><path d="M0 8.200c0-2.600 1.500-3.200 3.200-2.700v-1.500l2.800 2.600L3.200 9.300V8c-1.200-.3-2.200-.3-3.200 .2z" fill="#62b83c"/></svg>
<div class="a" style="left:153.3px;top:326.2px;width:433.1px;height:10.500px;background:#efefef"></div>
<div class="a" style="left:234.2px;top:327px;width:233px;height:8px;background:#cbcbcb"></div>
<svg class="a" style="left:156.8px;top:328px" width="4" height="6" viewBox="0 0 4 6"><path d="M3.200 .6L.8 3l2.400 2.400" stroke="#333" stroke-width="1" fill="none"/></svg>
<svg class="a" style="left:579.8px;top:327.5px" width="4" height="6" viewBox="0 0 4 6"><path d="M.8 .6L3.200 3L.8 5.400" stroke="#444" stroke-width="1" fill="none"/></svg>
<div class="a" style="left:586.4px;top:54px;width:10.600px;height:283px;background:#f0f0f0"></div>
<div class="a" style="left:586.7px;top:94px;width:8.800px;height:70.700px;background:#cdcdcd"></div>
<svg class="a" style="left:588px;top:59.5px" width="6" height="4" viewBox="0 0 6 4"><path d="M.6 3.200L3 .8l2.400 2.400" stroke="#444" stroke-width="1" fill="none"/></svg>
<svg class="a" style="left:588px;top:319px" width="6" height="4" viewBox="0 0 6 4"><path d="M.6 .8L3 3.200L5.400 .8" stroke="#444" stroke-width="1" fill="none"/></svg>
<div class="a" style="left:153.3px;top:325px;width:1.6px;height:11.5px;background:#8c8c8c"></div><div class="inp" style="left:600.5px;top:44px;width:61.5px;height:11.5px"></div>
<div class="t" style="left:602.5px;top:46.5px;font-size:6.3px;color:#111">format</div>
<svg class="a" style="left:665.5px;top:45px" width="9" height="9.5" viewBox="0 0 9 9.5"><path d="M1 1h5l1.500 1.500V8.500H1z" fill="#8a98a8"/><path d="M1 1.300l7 7M8 1.300l-7 7" stroke="#d0303a" stroke-width="1.100"/></svg>
<div class="a" style="left:676px;top:43.5px;width:11.5px;height:12px;background:#b4cdf0;border:1px solid #86a8dc"></div>
<svg class="a" style="left:677.5px;top:45px" width="8.5" height="9.5" viewBox="0 0 8.5 9.5"><path d="M4.200 .5c1.500 1 1.500 3 .8 4.500h2.500v2.500H1V5h2.500c-.8-1.500-.800-3.500 .7-4.500z" fill="#2c3e8e"/></svg>
<svg class="a" style="left:688.5px;top:48.5px" width="3.4" height="2.4" viewBox="0 0 3.4 2.4"><path d="M0 0h3.400L1.700 2.200z" fill="#111"/></svg>
<svg class="a" style="left:693.5px;top:45.5px" width="10" height="9" viewBox="0 0 10 9"><path d="M.5 1.500h3.500l1 1H9v5.500H.5z" fill="#f2dc90" stroke="#d4b450" stroke-width=".5"/><rect x="3.500" y="3.800" width="5" height="3.400" fill="#fffbe8" stroke="#d4b450" stroke-width=".5"/></svg>
<svg class="a" style="left:705.5px;top:45.5px" width="10" height="9" viewBox="0 0 10 9"><path d="M.5 1.500h3.500l1 1H9v5.500H.5z" fill="#f2dc90" stroke="#d4b450" stroke-width=".5"/><rect x="2.300" y="3" width="7" height="5.400" rx="1.200" fill="#4cb0dc" stroke="#2f86b4" stroke-width=".5"/></svg>
<svg class="a" style="left:717.5px;top:45.5px" width="10" height="9" viewBox="0 0 10 9"><path d="M.5 1.500h3.500l1 1H9v5.500H.5z" fill="#f2dc90" stroke="#d4b450" stroke-width=".5"/><rect x="2.300" y="3" width="7" height="5.400" rx="1.200" fill="#4cb0dc" stroke="#2f86b4" stroke-width=".5"/></svg>
<svg class="a" style="left:729.5px;top:45px" width="10" height="10" viewBox="0 0 10 10"><path d="M1.500 1.500l7 7" stroke="#d85a48" stroke-width="1.400"/><path d="M8.500 1.500l-7 7" stroke="#4a6aa8" stroke-width="1.400"/><path d="M6 2L8.800 .6L8 3.500z" fill="#9aa6b4"/><path d="M.8 .8l2 .6l-.8 1.400z" fill="#b8c0c8"/></svg>
<div class="pg" style="left:600.5px;top:59px;width:45.5px;height:45.5px"></div>
<div class="pgh" style="left:602px;top:60.5px;width:42.5px;height:10.5px"></div>
<div class="t" style="left:615.3px;top:62.2px;font-size:7px;color:#f4f4f4;transform:scaleX(.86);transform-origin:0 50%">Text</div>
<div class="a" style="left:604.5px;top:64.5px;width:8px;height:3.5px;background:#7a5040;opacity:.55"></div>
<div class="pg" style="left:649.5px;top:59px;width:70px;height:69.5px"></div>
<div class="pgh" style="left:651px;top:60.5px;width:67px;height:10.5px"></div>
<svg class="a" style="left:653.5px;top:61.5px" width="9" height="8" viewBox="0 0 9 8"><ellipse cx="4.500" cy="4.500" rx="4" ry="3" fill="#e87a2a"/><path d="M2 3.500l3-2l2.500 2" stroke="#f8d070" stroke-width="1.200" fill="none"/></svg>
<div class="t" style="left:663px;top:62.2px;font-size:7px;color:#f4f4f4;transform:scaleX(.86);transform-origin:0 50%">Data Sources</div>
<div class="pg" style="left:655.5px;top:77px;width:45.5px;height:45px"></div>
<div class="pgh" style="left:657px;top:78.500px;width:42.500px;height:9.500px"></div>
<div class="t" style="left:669.6px;top:79.7px;font-size:7px;color:#f4f4f4;transform:scaleX(.86);transform-origin:0 50%">Text</div>
<div class="a" style="left:659.5px;top:82px;width:8px;height:3.500px;background:#7a5040;opacity:.55"></div>
<div class="a" style="left:606.5px;top:76px;width:21.500px;height:21.500px;background:#c6d6f6;border:1px solid #6e8ee0;border-radius:2px"></div>
<div class="a" style="left:609px;top:78.500px;width:15.500px;height:15.500px;background:#fff;border:1px solid #a8b4cc;box-shadow:.5px .5px 1px rgba(0,0,0,.4)"></div>
<div class="t" style="left:609px;top:80.5px;width:46.5px;text-align:center;font-size:11.40px;transform:scale(0.3333);transform-origin:0 0;color:#777">1.0;</div>
<div class="t" style="left:609px;top:85px;width:46.5px;text-align:center;font-size:13.80px;transform:scale(0.3333);transform-origin:0 0;color:#111;font-weight:bold">1234</div>
<div class="a" style="left:661px;top:93px;width:21px;height:21px;background:linear-gradient(#8a8a8a,#5a5a5a);border:1px solid #444;border-radius:2px"></div>
<div class="a" style="left:663.5px;top:95.5px;width:15.500px;height:15.500px;background:#fff;border:1px solid #999"></div>
<div class="t" style="left:663.5px;top:97.5px;width:46.5px;text-align:center;font-size:11.40px;transform:scale(0.3333);transform-origin:0 0;color:#777">1.0;</div>
<div class="t" style="left:663.5px;top:102px;width:46.5px;text-align:center;font-size:13.80px;transform:scale(0.3333);transform-origin:0 0;color:#111;font-weight:bold">1234</div>
<div class="a" style="left:608.500px;top:99px;width:53.500px;height:27px;background:#fff;border:1px solid #d0d0d0;box-shadow:1px 1px 2px rgba(0,0,0,.25)"></div>
<div class="t" style="left:612.7px;top:101.8px;font-size:6.300px;color:#333">Formatted Text</div>
<div class="a" style="left:612px;top:109px;width:46.500px;height:14.500px;background:#a8c4e8;border-radius:1px"></div>
<div class="a" style="left:612px;top:109px;width:46.500px;height:7px;background:linear-gradient(#f8c8b0,#f09a78);border:.5px solid #8a5a4a;border-radius:1px 1px 0 0"></div>
<div class="t" style="left:619px;top:110.8px;font-size:10.80px;transform:scale(0.3333);transform-origin:0 0;color:#8a2a18;font-weight:bold">FormattedText1</div>
<div class="t" style="left:612.5px;top:118px;font-size:11.40px;transform:scale(0.3333);transform-origin:0 0;color:#234">Clock</div>
<div class="t" style="left:650px;top:118px;font-size:11.40px;transform:scale(0.3333);transform-origin:0 0;color:#234">Out</div>
<div class="a" style="left:598px;top:518px;width:146px;height:15px;background:linear-gradient(#f0f0f0,#fbf1e6 35%)"></div>
<div class="t" style="left:648.5px;top:522.5px;font-size:6.300px;font-weight:bold;color:#111">Arduino eBay Ads:</div>
<svg class="a" style="left:719.5px;top:520.5px" width="10" height="10" viewBox="0 0 10 10"><path d="M1.500 1.500l7 7" stroke="#d85a48" stroke-width="1.400"/><path d="M8.500 1.500l-7 7" stroke="#4a6aa8" stroke-width="1.400"/><path d="M6 2L8.800 .6L8 3.500z" fill="#9aa6b4"/><path d="M.8 .8l2 .6l-.8 1.400z" fill="#b8c0c8"/></svg>
<div class="a" style="left:732px;top:521px;width:9px;height:9px;background:#d8302a;border-radius:1.500px;border:1px solid #a01a16"></div>
<svg class="a" style="left:734px;top:523px" width="5" height="5" viewBox="0 0 5 5"><circle cx="2.500" cy="2.500" r="1.700" fill="none" stroke="#fff" stroke-width=".9"/></svg>
<div class="a" style="left:139.5px;top:348.3px;width:456.5px;height:17.5px;background:#fcefe4"></div>
<div class="t" style="left:145.3px;top:353.7px;font-size:6.3px">Port:</div>
<div class="inp" style="left:162.5px;top:351.3px;width:48px;height:11.800px"></div>
<div class="t" style="left:164.3px;top:353.9px;font-size:6px;width:36.500px;overflow:hidden">COM5 (Unava</div>
<div class="t" style="left:215px;top:353.7px;font-size:6.300px">Speed:</div>
<div class="inp" style="left:236.500px;top:351.300px;width:40.500px;height:11.800px"></div>
<div class="t" style="left:238.5px;top:353.9px;font-size:6px">9600</div>
<div class="t" style="left:280px;top:353.7px;font-size:6.300px"><u>F</u>ormat:</div>
<div class="inp" style="left:304.500px;top:351.300px;width:97.500px;height:11.800px"></div>
<div class="t" style="left:306.5px;top:353.9px;font-size:6.200px">Unformatted Text</div>
<svg class="a" style="left:203.5px;top:355.5px" width="4.5" height="3.5" viewBox="0 0 4.5 3.5"><path d="M.4 .6L2.250 2.600L4.100 .6" stroke="#333" stroke-width=".9" fill="none"/></svg>
<svg class="a" style="left:270.5px;top:355.5px" width="4.5" height="3.5" viewBox="0 0 4.5 3.5"><path d="M.4 .6L2.250 2.600L4.100 .6" stroke="#333" stroke-width=".9" fill="none"/></svg>
<svg class="a" style="left:395.5px;top:355.5px" width="4.5" height="3.5" viewBox="0 0 4.5 3.5"><path d="M.4 .6L2.250 2.600L4.100 .6" stroke="#333" stroke-width=".9" fill="none"/></svg>
<div class="cb" style="left:406px;top:353.7px"></div>
<svg class="a" style="left:406.5px;top:354.2px" width="6" height="6" viewBox="0 0 6 6"><path d="M1 3l1.500 1.700L5 .9" stroke="#111" stroke-width="1.100" fill="none"/></svg>
<div class="t" style="left:414.5px;top:354.2px;font-size:6.200px">Reset</div>
<div class="btn" style="left:437px;top:350.800px;width:47.500px;height:13.200px"></div>
<svg class="a" style="left:441px;top:352.5px" width="8" height="9" viewBox="0 0 8 9"><path d="M1 8l1-5l5-2l-1 5z" fill="#d0d4da" stroke="#7a8088" stroke-width=".7"/><path d="M2 7l3-4" stroke="#555" stroke-width=".8"/></svg>
<div class="t" style="left:454.5px;top:354.2px;font-size:6.200px">Connect</div>
<svg class="a" style="left:584.5px;top:351.5px" width="10" height="10" viewBox="0 0 10 10"><path d="M1.500 1.500l7 7" stroke="#d85a48" stroke-width="1.400"/><path d="M8.500 1.500l-7 7" stroke="#4a6aa8" stroke-width="1.400"/><path d="M6 2L8.800 .6L8 3.500z" fill="#9aa6b4"/><path d="M.8 .8l2 .6l-.8 1.400z" fill="#b8c0c8"/></svg>
<div class="a" style="left:139.5px;top:365.500px;width:456.5px;height:12px;background:#fcefe4"></div>
<div class="a" style="left:139.5px;top:377.200px;width:456.5px;height:154px;background:#fff"></div>
<div class="a" style="left:139.6px;top:365.600px;width:42.500px;height:12.500px;background:#fff;border:1px solid #d4d4d4;border-bottom:none"></div>
<svg class="a" style="left:144.8px;top:367.7px" width="7.5" height="6.5" viewBox="0 0 7.5 6.5"><rect x=".4" y=".4" width="6.700" height="5.700" fill="#24382c" stroke="#5a6a60" stroke-width=".6"/><path d="M1.500 2h3M1.500 3.500h2" stroke="#6fd080" stroke-width=".7"/></svg>
<div class="t" style="left:156.5px;top:368.6px;font-size:6.100px">Terminal</div>
<div class="a" style="left:182.600px;top:367.200px;width:32.500px;height:10px;background:#e6ebf4;border:1px solid #d4d8e0"></div>
<svg class="a" style="left:185.8px;top:368.8px" width="7.5" height="6.5" viewBox="0 0 7.5 6.5"><rect x=".4" y=".4" width="6.700" height="5.700" fill="#4a7ac0" stroke="#2c5088" stroke-width=".6"/><path d="M1 4l1.500-2l1.500 2.500l1.500-2l1 1" stroke="#cfe6ff" stroke-width=".7" fill="none"/></svg>
<div class="t" style="left:196.6px;top:369.6px;font-size:6.100px">Scope</div>
<div class="cb" style="left:145.7px;top:385.6px"></div>
<svg class="a" style="left:146.2px;top:386.1px" width="6" height="6" viewBox="0 0 6 6"><path d="M1 3l1.500 1.700L5 .9" stroke="#111" stroke-width="1.100" fill="none"/></svg>
<div class="t" style="left:154.4px;top:386.3px;font-size:6px">Auto Scroll</div>
<div class="cb" style="left:190px;top:385.6px"></div>
<div class="t" style="left:198.7px;top:386.3px;font-size:6px">Hold</div>
<div class="btn" style="left:542px;top:380.500px;width:48.500px;height:13px"></div>
<svg class="a" style="left:555px;top:382.5px" width="8" height="9" viewBox="0 0 8 9"><path d="M1.500 .8l3 3.500" stroke="#a07030" stroke-width="1"/><path d="M3 4l4 1l-1 3.500L1.500 7z" fill="#f0c840" stroke="#b89020" stroke-width=".5"/></svg>
<div class="t" style="left:566px;top:384px;font-size:6.200px">Clear</div>
<div class="a" style="left:142px;top:396.700px;width:451.800px;height:113.600px;background:#fff;border:1.300px solid #cfcfcf"></div>
<div class="a" style="left:583.500px;top:398px;width:9px;height:111px;background:#f7f7f7"></div>
<svg class="a" style="left:585px;top:401px" width="6" height="4" viewBox="0 0 6 4"><path d="M.6 3.200L3 .8l2.400 2.400" stroke="#b4b4b4" stroke-width=".9" fill="none"/></svg>
<svg class="a" style="left:585px;top:504px" width="6" height="4" viewBox="0 0 6 4"><path d="M.6 .8L3 3.200L5.400 .8" stroke="#b4b4b4" stroke-width=".9" fill="none"/></svg>
<div class="inp" style="left:146.3px;top:516.200px;width:355.500px;height:11.400px;border-color:#dadada"></div>
<div class="cb" style="left:505.8px;top:518.3px"></div>
<svg class="a" style="left:506.3px;top:518.8px" width="6" height="6" viewBox="0 0 6 6"><path d="M1 3l1.500 1.700L5 .9" stroke="#111" stroke-width="1.100" fill="none"/></svg>
<div class="t" style="left:514.2px;top:519px;font-size:6px">Auto Clear</div>
<div class="btn" style="left:550.300px;top:515px;width:40px;height:13px"></div>
<svg class="a" style="left:558.5px;top:518px" width="8" height="7" viewBox="0 0 8 7"><rect x=".4" y=".4" width="7.200" height="6" fill="#dcdfe4" stroke="#7a8088" stroke-width=".6"/><path d="M2 4.500l2-2l2 2" stroke="#555" stroke-width=".8" fill="none"/></svg>
<div class="t" style="left:571px;top:519px;font-size:6.200px">Send</div>
<div class="a" style="left:0;top:16.5px;width:4.800px;height:522px;background:linear-gradient(90deg,#aac6e6,#9cb8da)"></div>
<div class="a" style="left:4.800px;top:180px;width:1.500px;height:352px;background:#fbfbfb"></div>
<div class="a" style="left:743px;top:16.500px;width:5px;height:522px;background:linear-gradient(270deg,#aac6e6,#9cb8da)"></div>
<div class="a" style="left:4.800px;top:531px;width:738.200px;height:1.800px;background:#fbfbfb"></div>
<div class="a" style="left:0;top:532.800px;width:748px;height:5.200px;background:linear-gradient(#9cb8da,#aecae8)"></div>
</div>
</body>
</html>
